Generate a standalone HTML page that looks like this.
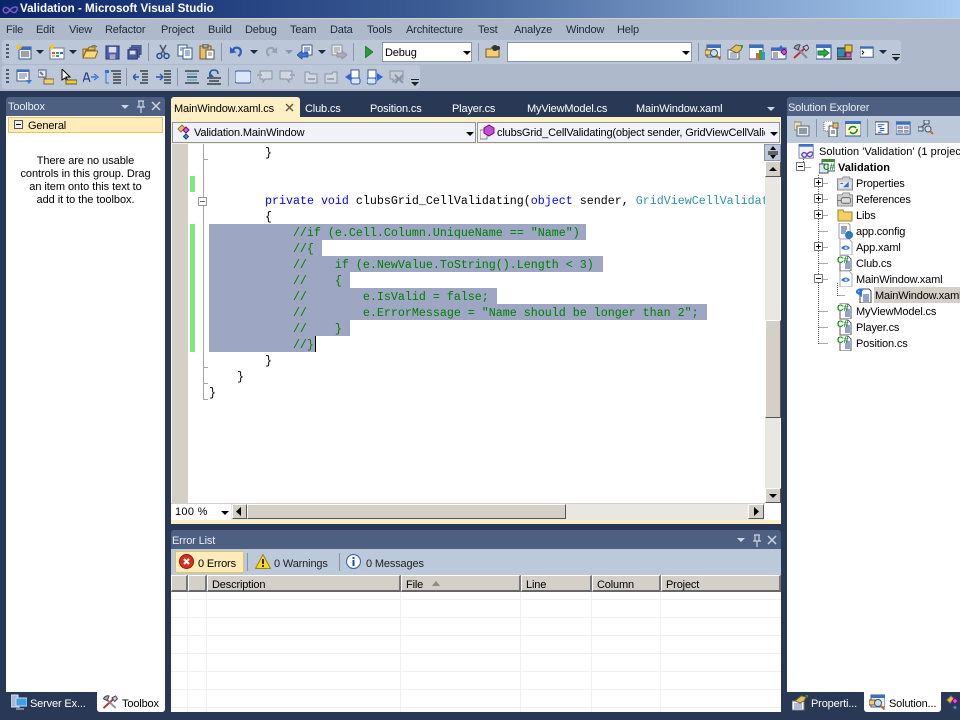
<!DOCTYPE html>
<html><head><meta charset="utf-8"><title>Validation - Microsoft Visual Studio</title>
<style>
*{box-sizing:border-box}
html,body{margin:0;padding:0;width:960px;height:720px;overflow:hidden;background:#293955}
body{position:relative;font:11px/16px "Liberation Sans",sans-serif;letter-spacing:-.15px;color:#000}
.a,.t,svg.i{position:absolute}
.t{white-space:nowrap;margin-top:1px}
.m{color:#1b2a40;top:21px}
.w{color:#fff}
.tab{color:#fff;top:100px}
.h{color:#e8edf5}
.code{position:absolute;left:209px;font:11.67px/16px "Liberation Mono",monospace;letter-spacing:0;white-space:pre;color:#000;width:556px;overflow:hidden;height:16px}
.k{color:#0000ff}.c{color:#008000}.y{color:#2b91af}
.sel{position:absolute;left:209px;background:#9da6c2;height:16px}
.sep{position:absolute;width:1px;background:#8794a9}
.btn{position:absolute;background:#d4d0c8;border:1px solid;border-color:#fff #555 #555 #fff}
.hc{position:absolute;top:575px;height:17px;background:#d4d0c8;border-right:2px solid #777;border-left:1px solid #fff;border-top:1px solid #fff;border-bottom:2px solid #666}
.tri{position:absolute;width:0;height:0;border-left:4px solid transparent;border-right:4px solid transparent;border-top:4px solid #1b2a40}
.rl{position:absolute;left:171px;width:610px;height:1px;background:#f0f0f0}
.vl{position:absolute;top:592px;height:120px;width:1px;background:#f0f0f0}
.grip{position:absolute;width:3px;height:16px;background:repeating-linear-gradient(#4d5a70 0 2px,transparent 2px 4px)}
</style></head><body>
<svg width="0" height="0" style="position:absolute"><defs>
<symbol id="newp" viewBox="0 0 16 16"><rect x="3" y="3" width="12" height="12" fill="#e8f0fa" stroke="#3a5a90"/><rect x="3" y="3" width="12" height="3" fill="#3d6fc0"/><path d="M5 8h8M5 10h8M5 12h8" stroke="#555"/><path d="M1 1l4 4M5 1l-4 4M3 0v6M0 3h6" stroke="#f5c518"/></symbol>
<symbol id="adds" viewBox="0 0 16 16"><rect x="1" y="4" width="14" height="11" fill="#fff" stroke="#6a7a90"/><rect x="3" y="8" width="3" height="2" fill="#e44"/><rect x="7" y="8" width="3" height="2" fill="#3a3"/><rect x="11" y="8" width="3" height="2" fill="#36c"/><rect x="3" y="11" width="3" height="2" fill="#dc3"/><rect x="7" y="11" width="3" height="2" fill="#39c"/><path d="M1 1l4 4M5 1l-4 4M3 0v6M0 3h6" stroke="#f5c518"/></symbol>
<symbol id="open" viewBox="0 0 16 16"><path d="M1 5h5l1-2h6v3H4L1 14z" fill="#e8c060" stroke="#8a6a20"/><path d="M1 14l3-7h12l-3 7z" fill="#f8d880" stroke="#8a6a20"/><path d="M9 3q3-3 6 0" stroke="#666" fill="none"/></symbol>
<symbol id="save" viewBox="0 0 16 16"><rect x="1" y="1" width="14" height="14" fill="#4a5cb0" stroke="#2a3570"/><rect x="4" y="2" width="8" height="6" fill="#dde"/><rect x="5" y="10" width="6" height="5" fill="#aab"/></symbol>
<symbol id="saveall" viewBox="0 0 16 16"><rect x="5" y="0" width="10" height="10" fill="#5a6aa8" stroke="#3a4570"/><rect x="3" y="3" width="10" height="10" fill="#5a6aa8" stroke="#3a4570"/><rect x="1" y="5" width="10" height="10" fill="#4a5ca0" stroke="#2a3570"/><rect x="3" y="6" width="6" height="4" fill="#dde"/></symbol>
<symbol id="cut" viewBox="0 0 16 16"><path d="M5 1l5 9M11 1L6 10" stroke="#556" stroke-width="1.5"/><circle cx="4.5" cy="12" r="2.5" fill="none" stroke="#2a4a9a" stroke-width="1.5"/><circle cx="11.5" cy="12" r="2.5" fill="none" stroke="#2a4a9a" stroke-width="1.5"/></symbol>
<symbol id="copy" viewBox="0 0 16 16"><rect x="1" y="1" width="9" height="11" fill="#fff" stroke="#3a5a90"/><rect x="6" y="4" width="9" height="11" fill="#fff" stroke="#3a5a90"/><path d="M8 7h5M8 9h5M8 11h5M3 4h4M3 6h2" stroke="#3a6ac0"/></symbol>
<symbol id="paste" viewBox="0 0 16 16"><rect x="1" y="2" width="11" height="13" fill="#e8c060" stroke="#7a5a20"/><rect x="4" y="0" width="5" height="4" fill="#aaa" stroke="#555"/><rect x="7" y="6" width="8" height="9" fill="#fff" stroke="#555"/><path d="M9 9h4M9 11h4" stroke="#777"/></symbol>
<symbol id="undo" viewBox="0 0 16 16"><path d="M4 8q1-5 5-4 5 1 3 7l-2 2" fill="none" stroke="#2f5fb5" stroke-width="2.4"/><path d="M1 3l0 7 7-1z" fill="#2f5fb5"/></symbol>
<symbol id="redo" viewBox="0 0 16 16"><path d="M12 8q-1-5-5-4-5 1-3 7l2 2" fill="none" stroke="#98a2ae" stroke-width="2.4"/><path d="M15 3v7l-7-1z" fill="#98a2ae"/></symbol>
<symbol id="nav" viewBox="0 0 16 16"><rect x="5" y="1" width="10" height="10" fill="#fff" stroke="#3a5a90"/><path d="M7 4h6M7 6h6M7 8h4" stroke="#34a"/><path d="M0 11l5-4v2h6v4H5v2z" fill="#3a78d8" stroke="#1a4a90" stroke-width=".7"/></symbol>
<symbol id="navg" viewBox="0 0 16 16"><rect x="1" y="1" width="10" height="10" fill="#e8e8e8" stroke="#8a93a0"/><path d="M3 4h6M3 6h6M3 8h4" stroke="#999"/><path d="M16 11l-5-4v2H6v4h5v2z" fill="#aab" stroke="#889" stroke-width=".7"/></symbol>
<symbol id="find" viewBox="0 0 16 16"><path d="M1 5h5l1-2h7v10H1z" fill="#f0d070" stroke="#7a5a20"/><circle cx="10" cy="4" r="3" fill="#333"/><circle cx="13" cy="4" r="2" fill="#333"/></symbol>
<symbol id="t1" viewBox="0 0 16 16"><rect x="2" y="1" width="14" height="12" fill="#e8f0fa" stroke="#3a5a90"/><rect x="2" y="1" width="14" height="3" fill="#3d6fc0"/><path d="M0 6h6v5H0z" fill="#f0d070" stroke="#7a5a20"/><circle cx="9" cy="9" r="3.5" fill="#cde" stroke="#456"/><path d="M11.5 11.5l4 4" stroke="#b07020" stroke-width="2"/></symbol>
<symbol id="t2" viewBox="0 0 16 16"><rect x="1" y="6" width="11" height="9" fill="#fff" stroke="#5a6a80"/><path d="M3 9h7M3 11h7M3 13h7" stroke="#67a"/><path d="M3 6l6-5 6 1-1 4-4 3z" fill="#e0c060" stroke="#7a6a30"/><path d="M12 1l4 0 0 3z" fill="#2a9a3a"/></symbol>
<symbol id="t3" viewBox="0 0 16 16"><rect x="0" y="1" width="14" height="14" fill="#fff" stroke="#3a5a90"/><rect x="0" y="1" width="14" height="3" fill="#3d6fc0"/><rect x="7" y="9" width="3" height="7" fill="#e55"/><rect x="10" y="6" width="3" height="10" fill="#3a3"/><rect x="13" y="8" width="3" height="8" fill="#39c"/></symbol>
<symbol id="t4" viewBox="0 0 16 16"><rect x="0" y="4" width="15" height="11" fill="#fff" stroke="#3a5a90"/><rect x="0" y="4" width="15" height="3" fill="#3d6fc0"/><path d="M2 9h5M2 11h5M2 13h5" stroke="#557"/><path d="M10 8l3-3 3 3-3 3z" fill="#d060d0" stroke="#808"/><path d="M8 4l2-3 2 3z" fill="#36c"/></symbol>
<symbol id="tools" viewBox="0 0 16 16"><path d="M1 14L12 4" stroke="#c03030" stroke-width="2"/><path d="M14 14L4 4" stroke="#8a8a9a" stroke-width="2"/><path d="M1 4q2-4 6-3L5 6z" fill="#9aa2b0" stroke="#445"/><path d="M10 3l4-2 2 3-3 3z" fill="#ccd" stroke="#445"/></symbol>
<symbol id="t6" viewBox="0 0 16 16"><rect x="0" y="1" width="15" height="14" fill="#fff" stroke="#2a4a9a"/><rect x="0" y="1" width="15" height="3" fill="#3d6fc0"/><path d="M2 7h6V5l5 4-5 4v-2H2z" fill="#2ab02a" stroke="#175"/></symbol>
<symbol id="t7" viewBox="0 0 16 16"><rect x="0" y="4" width="8" height="9" fill="#3a8aa8" stroke="#234"/><rect x="8" y="1" width="7" height="7" fill="#f0c030" stroke="#654"/><rect x="9" y="9" width="5" height="4" fill="#e060c0" stroke="#636"/><path d="M0 15h15" stroke="#555" stroke-width="2"/></symbol>
<symbol id="t8" viewBox="0 0 16 16"><rect x="0" y="2" width="14" height="11" fill="#fff" stroke="#3a5a90"/><rect x="0" y="2" width="14" height="2" fill="#3d6fc0"/><path d="M2 6l2 2-2 2" fill="none" stroke="#000"/></symbol>
<symbol id="b1" viewBox="0 0 16 16"><rect x="1" y="1" width="12" height="11" fill="#fff" stroke="#3a5a90"/><rect x="1" y="1" width="12" height="2" fill="#3d6fc0"/><path d="M3 5h8M3 7h8M3 9h6" stroke="#67a"/><path d="M10 11h6l-3 4z" fill="#3a78d8"/></symbol>
<symbol id="b2" viewBox="0 0 16 16"><rect x="0" y="1" width="8" height="7" fill="#e8f0fa" stroke="#557"/><path d="M2 3l3 3M6 8l5 5" stroke="#777" stroke-width="2"/><rect x="6" y="10" width="10" height="5" fill="#f0d070" stroke="#765"/></symbol>
<symbol id="b3" viewBox="0 0 16 16"><path d="M1 0v11l3-2 2 4 1-1-2-4h4z" fill="#fff" stroke="#000"/><rect x="5" y="11" width="11" height="4" fill="#f0d020" stroke="#654"/></symbol>
<symbol id="b4" viewBox="0 0 16 16"><path d="M0 13l3-9h1l3 9M1.5 10h4" stroke="#23408a" stroke-width="1.2" fill="none"/><path d="M8 8h5M11 5l4 3-4 3" stroke="#3a78d8" stroke-width="1.4" fill="none"/></symbol>
<symbol id="b5" viewBox="0 0 16 16"><path d="M6 2h10M8 5h8M8 8h8M8 11h8M8 14h8" stroke="#000"/><path d="M1 2h3M1 2v12h3" stroke="#2a78d8" fill="none"/><rect x="0" y="1" width="4" height="3" fill="#2a78d8"/></symbol>
<symbol id="b6" viewBox="0 0 16 16"><path d="M7 2h8M9 5h6M9 8h6M9 11h6M7 14h8" stroke="#000"/><path d="M6 8H1M3 5L0 8l3 3" stroke="#2a5aa8" stroke-width="1.4" fill="none"/></symbol>
<symbol id="b7" viewBox="0 0 16 16"><path d="M9 2h7M9 5h7M9 8h7M9 11h7M9 14h7" stroke="#000"/><path d="M1 8h6M5 5l3 3-3 3" stroke="#2a5aa8" stroke-width="1.4" fill="none"/></symbol>
<symbol id="b8" viewBox="0 0 16 16"><path d="M1 2h14M3 5h10M3 8h10M3 11h10M1 14h14" stroke="#000"/><path d="M3 5h10M3 11h10" stroke="#2a9ac8"/></symbol>
<symbol id="b9" viewBox="0 0 16 16"><path d="M1 9h14M3 12h10M1 15h14" stroke="#000"/><path d="M12 5q0-4-4-4T4 5l2 2" fill="none" stroke="#2a5aa8" stroke-width="1.6"/><path d="M3 3v5h5z" fill="#2a5aa8"/></symbol>
<symbol id="bm" viewBox="0 0 16 16"><rect x="0" y="2" width="16" height="12" rx="2" fill="#dbe6f8" stroke="#2f5ab0"/></symbol>
<symbol id="bu" viewBox="0 0 16 16"><path d="M3 2h12v8H8l-2 3V10H3z" fill="#d2d8e2" stroke="#8a94a4"/><path d="M0 6h5" stroke="#a0a8b4" stroke-width="2"/></symbol>
<symbol id="bf" viewBox="0 0 16 16"><path d="M3 3h4l1 2h7v9H3z" fill="#d2d8e2" stroke="#8a94a4"/><path d="M6 10h7" stroke="#a0a8b4" stroke-width="2"/></symbol>
<symbol id="bb" viewBox="0 0 16 16"><rect x="6" y="1" width="8" height="8" fill="#fff" stroke="#3a5a90"/><rect x="6" y="9" width="9" height="6" rx="2" fill="#dbe6f8" stroke="#2f5ab0"/><path d="M0 8l6-4v8z" fill="#2a6ad8"/></symbol>
<symbol id="bc" viewBox="0 0 16 16"><rect x="1" y="1" width="8" height="8" fill="#fff" stroke="#3a5a90"/><rect x="0" y="9" width="9" height="6" rx="2" fill="#dbe6f8" stroke="#2f5ab0"/><path d="M16 8l-6-4v8z" fill="#2a6ad8"/></symbol>
<symbol id="bx" viewBox="0 0 16 16"><path d="M1 2h13v8H7l-3 3V10H1z" fill="#c6ccd6" stroke="#8a94a4"/><path d="M6 6l8 8M14 6l-8 8" stroke="#8a94a4" stroke-width="2"/></symbol>
<symbol id="cs" viewBox="0 0 16 16"><path d="M3 1h8l3 3v12H3z" fill="#fff" stroke="#555a70"/><path d="M8 7h5M8 9h5M8 11h5M8 13h5" stroke="#2a4a90"/><rect x="0" y="1" width="9" height="7" fill="#fff"/><text x="0" y="8" font-size="9" font-weight="bold" letter-spacing="0" fill="#108a10" font-family="Liberation Sans">C#</text></symbol>
<symbol id="xaml" viewBox="0 0 16 16"><path d="M2 0h9l3 3v13H2z" fill="#fff" stroke="#aaa"/><path d="M3 9q5-5 9 0-4 4-9 0z" fill="#2a78d8"/><circle cx="8" cy="9" r="1.5" fill="#bfe0ff"/></symbol>
<symbol id="propf" viewBox="0 0 16 16"><path d="M0 3h5l1-2h7v2h3v12H0z" fill="#cfcfcf" stroke="#888"/><rect x="2" y="6" width="12" height="7" fill="#dfeaf8"/><path d="M12 6v6H6z" fill="#3a6ac0"/><path d="M3 8h3" stroke="#3a6ac0"/></symbol>
<symbol id="reff" viewBox="0 0 16 16"><path d="M0 3h5l1-2h7v2h3v12H0z" fill="#cfcfcf" stroke="#888"/><rect x="4" y="6" width="10" height="6" rx="2" fill="#ddd" stroke="#666"/><path d="M0 9h4" stroke="#666"/></symbol>
<symbol id="folder" viewBox="0 0 16 16"><path d="M1 3h5l1 2h8v9H1z" fill="#f4d060" stroke="#a08030"/></symbol>
<symbol id="cfg" viewBox="0 0 16 16"><path d="M2 0h9l2 2v14H2z" fill="#fff" stroke="#99a"/><path d="M4 4h6M4 6h6M4 8h5M4 10h4" stroke="#2a4a90"/><circle cx="12" cy="12" r="4" fill="#2a78c8"/><path d="M10 11h3v3z" fill="#2a9a3a"/></symbol>
<symbol id="csc" viewBox="0 0 16 16"><path d="M4 2h9l2 2v12H4z" fill="#fff" stroke="#444"/><path d="M7 8h6M7 10h6M7 12h6M7 14h6" stroke="#2a4a90"/><path d="M0 6q2-5 7-3" fill="none" stroke="#2a78d8" stroke-width="2"/><path d="M0 6l6 4V3z" fill="#2a78d8"/></symbol>
<symbol id="sln" viewBox="0 0 18 18"><rect x="0" y="0" width="16" height="16" fill="#eef3fb" stroke="#6a7fa8"/><rect x="0" y="0" width="16" height="3" fill="#3d6fc0"/><path d="M3 12c2-4 5-2 6 0s4 4 6 0-4-4-6 0-4 4-6 0z" fill="none" stroke="#6a4ac0" stroke-width="1.6"/></symbol>
<symbol id="proj" viewBox="0 0 16 16"><rect x="3" y="0" width="13" height="12" fill="#fff" stroke="#456"/><rect x="3" y="0" width="13" height="3" fill="#3d8a3d"/><rect x="0" y="5" width="9" height="9" fill="#e0e8f4" stroke="#456"/><text x="4" y="11" font-size="9" font-weight="bold" letter-spacing="0" fill="#108a10" font-family="Liberation Sans">C#</text></symbol>
<symbol id="se1" viewBox="0 0 16 16"><path d="M0 1h7v8H0z" fill="#f0e0a0" stroke="#887"/><rect x="3" y="5" width="12" height="10" fill="#e8eef6" stroke="#667"/><path d="M5 8h8M5 10h8M5 12h8" stroke="#345"/></symbol>
<symbol id="se2" viewBox="0 0 16 16"><rect x="1" y="0" width="9" height="10" fill="#fff" stroke="#667" stroke-dasharray="1 1"/><path d="M6 5h5l3 3v8H6z" fill="#fff" stroke="#445"/><path d="M8 10h4M8 12h4" stroke="#2a4a90"/><rect x="10" y="2" width="5" height="5" fill="#e8c060" stroke="#765"/></symbol>
<symbol id="se3" viewBox="0 0 16 16"><rect x="0" y="0" width="16" height="15" fill="#fff7d0" stroke="#2a5a9a"/><rect x="0" y="0" width="16" height="3" fill="#3d6fc0"/><path d="M4 9a4 4 0 0 1 7-2M12 8a4 4 0 0 1-7 3" fill="none" stroke="#1a8a1a" stroke-width="1.6"/></symbol>
<symbol id="se4" viewBox="0 0 16 16"><rect x="0" y="1" width="14" height="13" fill="#fff" stroke="#334"/><path d="M3 4h7M3 6h4M5 8h5M5 10h5M3 12h4" stroke="#1a5ad8"/></symbol>
<symbol id="se5" viewBox="0 0 16 16"><rect x="0" y="1" width="15" height="13" fill="#e8eef6" stroke="#2a5a9a"/><rect x="0" y="1" width="15" height="3" fill="#3d6fc0"/><path d="M2 6h5v2H2zM9 6h4v2H9zM2 10h5v2H2zM9 10h4v2H9z" fill="#aab" stroke="#667" stroke-width=".5"/></symbol>
<symbol id="se6" viewBox="0 0 16 16"><rect x="6" y="0" width="5" height="4" fill="#cde" stroke="#456"/><rect x="0" y="7" width="5" height="4" fill="#cde" stroke="#456"/><path d="M8 4L3 7" stroke="#456"/><circle cx="10" cy="9" r="3" fill="#cde" stroke="#456"/><path d="M12 11l3 3" stroke="#c07020" stroke-width="2"/></symbol>
<symbol id="srv" viewBox="0 0 16 16"><rect x="0" y="1" width="7" height="12" fill="#a8b8d0" stroke="#dde"/><rect x="5" y="4" width="11" height="8" fill="#3aa0e8" stroke="#cde"/><path d="M8 12v2M5 15h8" stroke="#cde"/></symbol>
<symbol id="prp" viewBox="0 0 16 16"><rect x="0" y="6" width="12" height="9" fill="#fff" stroke="#778"/><path d="M2 9h8M2 11h8M2 13h8" stroke="#67a"/><path d="M3 6l6-5 5 1-2 4-4 2z" fill="#e0c060" stroke="#7a6a30"/><path d="M13 0l3 0 0 3z" fill="#2a9a3a"/></symbol>
</defs></svg>

<!-- title bar -->
<div class="a" style="left:0;top:0;width:960px;height:18px;background:linear-gradient(90deg,#0a246a 0,#3b5c94 45%,#7b9cc8 75%,#a6caf0 100%)"></div>
<div class="a" style="left:0;top:18px;width:960px;height:1px;background:#d4d0c8"></div>
<svg class="i" style="left:2px;top:6px" width="16" height="8" viewBox="0 0 16 8"><path d="M1 4c1.5-4 4-3 7 0s5 4 7 0-4-4-7 0-5.500 4-7 0z" fill="none" stroke="#7a5ac8" stroke-width="1.500"/></svg>
<div class="t" style="left:20px;top:1px;margin-top:0;color:#fff;font-weight:bold;font-size:11.6px;letter-spacing:0">Validation - Microsoft Visual Studio</div>

<!-- menu -->
<div class="a" style="left:0;top:19px;width:960px;height:72px;background:#aeb9cb"></div>
<span class="t m" style="left:6px">File</span><span class="t m" style="left:36px">Edit</span><span class="t m" style="left:69px">View</span><span class="t m" style="left:105px">Refactor</span><span class="t m" style="left:161px">Project</span><span class="t m" style="left:208px">Build</span><span class="t m" style="left:245px">Debug</span><span class="t m" style="left:290px">Team</span><span class="t m" style="left:330px">Data</span><span class="t m" style="left:367px">Tools</span><span class="t m" style="left:406px">Architecture</span><span class="t m" style="left:478px">Test</span><span class="t m" style="left:514px">Analyze</span><span class="t m" style="left:566px">Window</span><span class="t m" style="left:617px">Help</span>

<!-- toolbar 1 -->
<div class="a" style="left:2px;top:40px;width:899px;height:24px;background:#bcc7d8;border-radius:3px"></div>
<div class="grip" style="left:6px;top:44px"></div>
<svg class="i" style="left:16px;top:44px" width="16" height="16"><use href="#newp"/></svg><div class="tri" style="left:36px;top:50px"></div>
<svg class="i" style="left:49px;top:44px" width="16" height="16"><use href="#adds"/></svg><div class="tri" style="left:69px;top:50px"></div>
<svg class="i" style="left:82px;top:44px" width="16" height="16"><use href="#open"/></svg>
<svg class="i" style="left:105px;top:45px" width="15" height="15"><use href="#save"/></svg>
<svg class="i" style="left:127px;top:45px" width="15" height="15"><use href="#saveall"/></svg>
<div class="sep" style="left:148px;top:43px;height:18px"></div>
<svg class="i" style="left:155px;top:44px" width="16" height="16"><use href="#cut"/></svg>
<svg class="i" style="left:177px;top:44px" width="16" height="16"><use href="#copy"/></svg>
<svg class="i" style="left:199px;top:44px" width="16" height="16"><use href="#paste"/></svg>
<div class="sep" style="left:221px;top:43px;height:18px"></div>
<svg class="i" style="left:229px;top:44px" width="15" height="15"><use href="#undo"/></svg><div class="tri" style="left:250px;top:50px"></div>
<svg class="i" style="left:264px;top:44px" width="14" height="15"><use href="#redo"/></svg><div class="tri" style="left:285px;top:50px;border-top-color:#8a94a4"></div>
<svg class="i" style="left:297px;top:44px" width="16" height="16"><use href="#nav"/></svg><div class="tri" style="left:318px;top:50px"></div>
<svg class="i" style="left:331px;top:44px" width="16" height="16"><use href="#navg"/></svg>
<div class="sep" style="left:353px;top:43px;height:18px"></div>
<svg class="i" style="left:365px;top:46px" width="8" height="12"><path d="M0 0l8 6-8 6z" fill="#2a9a3a" stroke="#165a20" stroke-width=".6"/></svg>
<div class="a" style="left:382px;top:42px;width:90px;height:20px;background:#fff;border:1px solid #8a94a8"></div>
<span class="t" style="left:385px;top:44px">Debug</span><div class="tri" style="left:463px;top:51px;border-top-color:#000"></div>
<div class="sep" style="left:478px;top:43px;height:18px"></div>
<svg class="i" style="left:485px;top:44px" width="16" height="16"><use href="#find"/></svg>
<div class="a" style="left:507px;top:42px;width:185px;height:20px;background:#fff;border:1px solid #8a94a8"></div>
<div class="tri" style="left:682px;top:51px;border-top-color:#000"></div>
<div class="sep" style="left:698px;top:43px;height:18px"></div>
<svg class="i" style="left:705px;top:44px" width="16" height="16"><use href="#t1"/></svg>
<svg class="i" style="left:727px;top:44px" width="16" height="16"><use href="#t2"/></svg>
<svg class="i" style="left:749px;top:44px" width="16" height="16"><use href="#t3"/></svg>
<svg class="i" style="left:771px;top:44px" width="16" height="16"><use href="#t4"/></svg>
<svg class="i" style="left:793px;top:44px" width="16" height="16"><use href="#tools"/></svg>
<svg class="i" style="left:816px;top:44px" width="16" height="16"><use href="#t6"/></svg>
<svg class="i" style="left:837px;top:44px" width="16" height="16"><use href="#t7"/></svg>
<svg class="i" style="left:860px;top:45px" width="15" height="15"><use href="#t8"/></svg><div class="tri" style="left:879px;top:50px"></div>
<div class="a" style="left:892px;top:54px;width:8px;height:1px;background:#222"></div><div class="tri" style="left:892px;top:57px;border-top-color:#222"></div>

<!-- toolbar 2 -->
<div class="a" style="left:2px;top:65px;width:418px;height:24px;background:#bcc7d8;border-radius:3px"></div>
<div class="grip" style="left:6px;top:69px"></div>
<svg class="i" style="left:16px;top:69px" width="16" height="16"><use href="#b1"/></svg>
<svg class="i" style="left:38px;top:69px" width="16" height="16"><use href="#b2"/></svg>
<svg class="i" style="left:61px;top:69px" width="16" height="16"><use href="#b3"/></svg>
<svg class="i" style="left:83px;top:69px" width="16" height="16"><use href="#b4"/></svg>
<svg class="i" style="left:105px;top:69px" width="16" height="16"><use href="#b5"/></svg>
<div class="sep" style="left:126px;top:68px;height:18px"></div>
<svg class="i" style="left:133px;top:69px" width="16" height="16"><use href="#b6"/></svg>
<svg class="i" style="left:155px;top:69px" width="16" height="16"><use href="#b7"/></svg>
<div class="sep" style="left:177px;top:68px;height:18px"></div>
<svg class="i" style="left:184px;top:69px" width="16" height="16"><use href="#b8"/></svg>
<svg class="i" style="left:206px;top:69px" width="16" height="16"><use href="#b9"/></svg>
<div class="sep" style="left:228px;top:68px;height:18px"></div>
<svg class="i" style="left:235px;top:69px" width="16" height="16"><use href="#bm"/></svg>
<svg class="i" style="left:257px;top:69px" width="16" height="16"><use href="#bu"/></svg>
<svg class="i" style="left:279px;top:69px;transform:scaleX(-1)" width="16" height="16"><use href="#bu"/></svg>
<svg class="i" style="left:302px;top:69px" width="16" height="16"><use href="#bf"/></svg>
<svg class="i" style="left:324px;top:69px;transform:scaleX(-1)" width="16" height="16"><use href="#bf"/></svg>
<svg class="i" style="left:345px;top:69px" width="16" height="16"><use href="#bb"/></svg>
<svg class="i" style="left:367px;top:69px" width="16" height="16"><use href="#bc"/></svg>
<svg class="i" style="left:389px;top:69px" width="16" height="16"><use href="#bx"/></svg>
<div class="a" style="left:411px;top:79px;width:8px;height:1px;background:#222"></div><div class="tri" style="left:411px;top:82px;border-top-color:#222"></div>

<!-- main dark -->
<div class="a" style="left:0;top:91px;width:960px;height:629px;background:#293955"></div>

<!-- Toolbox -->
<div class="a" style="left:6px;top:97px;width:159px;height:19px;background:#4d6082;border-radius:3px 3px 0 0"></div>
<span class="t h" style="left:8px;top:98px">Toolbox</span>
<div class="tri" style="left:121px;top:105px;border-top-color:#ced4df"></div>
<svg class="i" style="left:136px;top:100px" width="10" height="13"><path d="M2 1h6M3 1v6h4V1M1 7h8M5 7v6" fill="none" stroke="#ced4df" stroke-width="1.200"/></svg>
<svg class="i" style="left:151px;top:101px" width="10" height="10"><path d="M1 1l8 8M9 1L1 9" stroke="#ced4df" stroke-width="1.500"/></svg>
<div class="a" style="left:6px;top:116px;width:159px;height:576px;background:#fff"></div>
<div class="a" style="left:8px;top:117px;width:155px;height:16px;background:#ffecb8;border:1px solid #e5c365"></div>
<div class="a" style="left:14px;top:120px;width:9px;height:9px;background:#eee;border:1px solid #555"></div><div class="a" style="left:16px;top:124px;width:5px;height:1px;background:#000"></div>
<span class="t" style="left:28px;top:117px">General</span>
<div class="a" style="left:6px;top:155px;width:159px;text-align:center;line-height:13px;letter-spacing:-.05px">There are no usable<br>controls in this group. Drag<br>an item onto this text to<br>add it to the toolbox.</div>
<svg class="i" style="left:11px;top:694px" width="16" height="16"><use href="#srv"/></svg>
<span class="t w" style="left:30px;top:695px">Server Ex...</span>
<div class="a" style="left:97px;top:692px;width:68px;height:20px;background:#fff;border-radius:0 0 3px 3px"></div>
<svg class="i" style="left:102px;top:695px" width="16" height="15"><use href="#tools"/></svg>
<span class="t" style="left:122px;top:695px">Toolbox</span>

<!-- Editor tabs -->
<div class="a" style="left:171px;top:97px;width:129px;height:21px;background:#ffefc4;border-radius:3px 3px 0 0"></div>
<span class="t" style="left:174px;top:100px">MainWindow.xaml.cs</span>
<svg class="i" style="left:285px;top:103px" width="9" height="9"><path d="M1 1l7 7M8 1L1 8" stroke="#6a5a3a" stroke-width="1.500"/></svg>
<span class="t tab" style="left:305px">Club.cs</span><span class="t tab" style="left:370px">Position.cs</span><span class="t tab" style="left:452px">Player.cs</span><span class="t tab" style="left:527px">MyViewModel.cs</span><span class="t tab" style="left:636px">MainWindow.xaml</span>
<div class="tri" style="left:767px;top:107px;border-top-color:#ced4df"></div>
<div class="a" style="left:171px;top:117px;width:610px;height:5px;background:#ffefc4"></div>
<!-- nav bars -->
<div class="a" style="left:171px;top:122px;width:610px;height:22px;background:#ffefc4"></div>
<div class="a" style="left:172px;top:122px;width:304px;height:21px;background:#f0f2f8;border:1px solid #8a94a8"></div>
<div class="a" style="left:477px;top:122px;width:303px;height:21px;background:#f0f2f8;border:1px solid #8a94a8"></div>
<svg class="i" style="left:177px;top:124px" width="16" height="16"><path d="M1 5l4-4 3 3-4 4z" fill="#f0c030" stroke="#876"/><path d="M9 3l3 3-3 3-3-3z" fill="#d060d0" stroke="#808"/><path d="M9 10l2.500 2.500L9 15l-2.500-2.500z" fill="#4a8ad8" stroke="#246"/></svg>
<span class="t" style="left:194px;top:124px">Validation.MainWindow</span>
<div class="tri" style="left:466px;top:132px;border-top-color:#000"></div>
<svg class="i" style="left:480px;top:124px" width="16" height="16"><rect x="0" y="6" width="7" height="9" fill="#eee" stroke="#888"/><path d="M9 1l5 3v5l-5 3-5-3V4z" fill="#c050d0" stroke="#808"/></svg>
<div class="t" style="left:497px;top:124px;width:268px;overflow:hidden">clubsGrid_CellValidating(object sender, GridViewCellValidatingEventArgs e)</div>
<div class="tri" style="left:770px;top:132px;border-top-color:#000"></div>

<!-- editor -->
<div class="a" style="left:171px;top:144px;width:610px;height:376px;background:#fff"></div>
<div class="a" style="left:172px;top:144px;width:16px;height:376px;background:#d4d0c8"></div>
<div class="a" style="left:190px;top:176px;width:5px;height:16px;background:#7fe87f"></div>
<div class="a" style="left:190px;top:224px;width:5px;height:128px;background:#7fe87f"></div>
<div class="a" style="left:203px;top:144px;width:1px;height:16px;background:#a8a8a8"></div>
<div class="a" style="left:203px;top:159px;width:5px;height:1px;background:#a8a8a8"></div>
<div class="a" style="left:198px;top:197px;width:9px;height:9px;background:#fff;border:1px solid #999"></div><div class="a" style="left:200px;top:201px;width:5px;height:1px;background:#666"></div>
<div class="a" style="left:203px;top:160px;width:1px;height:37px;background:#a8a8a8"></div>
<div class="a" style="left:203px;top:206px;width:1px;height:194px;background:#a8a8a8"></div>
<div class="a" style="left:203px;top:367px;width:5px;height:1px;background:#a8a8a8"></div>
<div class="a" style="left:203px;top:383px;width:5px;height:1px;background:#a8a8a8"></div>
<div class="a" style="left:203px;top:399px;width:5px;height:1px;background:#a8a8a8"></div>

<div class="sel" style="top:224px;width:377px"></div>
<div class="sel" style="top:240px;width:113px"></div>
<div class="sel" style="top:256px;width:394px"></div>
<div class="sel" style="top:272px;width:141px"></div>
<div class="sel" style="top:288px;width:288px"></div>
<div class="sel" style="top:304px;width:498px"></div>
<div class="sel" style="top:320px;width:141px"></div>
<div class="sel" style="top:336px;width:106px"></div>
<div class="a" style="left:315px;top:336px;width:1px;height:16px;background:#000"></div>

<div class="code" style="top:145px">        }</div>
<div class="code" style="top:193px">        <span class="k">private</span> <span class="k">void</span> clubsGrid_CellValidating(<span class="k">object</span> sender, <span class="y">GridViewCellValidatingEventArgs</span> e)</div>
<div class="code" style="top:209px">        {</div>
<div class="code c" style="top:225px">            //if (e.Cell.Column.UniqueName == "Name")</div>
<div class="code c" style="top:241px">            //{</div>
<div class="code c" style="top:257px">            //    if (e.NewValue.ToString().Length &lt; 3)</div>
<div class="code c" style="top:273px">            //    {</div>
<div class="code c" style="top:289px">            //        e.IsValid = false;</div>
<div class="code c" style="top:305px">            //        e.ErrorMessage = "Name should be longer than 2";</div>
<div class="code c" style="top:321px">            //    }</div>
<div class="code c" style="top:337px">            //}</div>
<div class="code" style="top:353px">        }</div>
<div class="code" style="top:369px">    }</div>
<div class="code" style="top:385px">}</div>

<!-- vertical scrollbar -->
<div class="a" style="left:765px;top:144px;width:15px;height:359px;background:#e9e7e2"></div>
<div class="a" style="left:764px;top:144px;width:17px;height:17px;background:#bcc7d8;border:1px solid #8a94a8"></div>
<svg class="i" style="left:767px;top:146px" width="12" height="13"><path d="M1 6h10M1 8h10" stroke="#000"/><path d="M6 0l3 4H3zM6 13l3-4H3z" fill="#000"/></svg>
<div class="btn" style="left:765px;top:161px;width:16px;height:16px"></div><div class="tri" style="left:769px;top:167px;border-top:0;border-bottom:4px solid #000"></div>
<div class="btn" style="left:765px;top:320px;width:16px;height:98px"></div>
<div class="btn" style="left:765px;top:488px;width:16px;height:15px"></div><div class="tri" style="left:769px;top:494px;border-top-color:#000"></div>
<!-- h scrollbar -->
<div class="a" style="left:172px;top:504px;width:59px;height:16px;background:#fff"></div>
<span class="t" style="left:175px;top:503px;letter-spacing:.3px">100 %</span>
<div class="tri" style="left:221px;top:511px;border-top-color:#000"></div>
<div class="a" style="left:231px;top:504px;width:533px;height:16px;background:#e9e7e2"></div>
<div class="btn" style="left:232px;top:504px;width:15px;height:15px"></div><svg class="i" style="left:236px;top:507px" width="5" height="9"><path d="M5 0v9L0 4.500z" fill="#000"/></svg>
<div class="btn" style="left:247px;top:504px;width:319px;height:15px"></div>
<div class="btn" style="left:748px;top:504px;width:16px;height:15px"></div><svg class="i" style="left:754px;top:507px" width="5" height="9"><path d="M0 0v9l5-4.500z" fill="#000"/></svg>
<div class="a" style="left:171px;top:503px;width:594px;height:1px;background:#d4d0c8"></div>
<div class="a" style="left:171px;top:520px;width:610px;height:4px;background:#ffefc4"></div>

<!-- Error list -->
<div class="a" style="left:171px;top:530px;width:610px;height:19px;background:#4d6082;border-radius:3px 3px 0 0"></div>
<span class="t h" style="left:172px;top:532px">Error List</span>
<div class="tri" style="left:737px;top:538px;border-top-color:#ced4df"></div>
<svg class="i" style="left:752px;top:534px" width="10" height="13"><path d="M2 1h6M3 1v6h4V1M1 7h8M5 7v6" fill="none" stroke="#ced4df" stroke-width="1.200"/></svg>
<svg class="i" style="left:767px;top:535px" width="10" height="10"><path d="M1 1l8 8M9 1L1 9" stroke="#ced4df" stroke-width="1.500"/></svg>
<div class="a" style="left:171px;top:549px;width:610px;height:26px;background:#bcc9db"></div>
<div class="a" style="left:175px;top:551px;width:69px;height:22px;background:#ffecb8;border:1px solid #e5c365"></div>
<svg class="i" style="left:179px;top:554px" width="15" height="15"><circle cx="7.500" cy="7.500" r="7" fill="#d83020" stroke="#8a1a10"/><path d="M5 5l5 5M10 5l-5 5" stroke="#fff" stroke-width="2"/></svg>
<span class="t" style="left:198px;top:555px">0 Errors</span>
<div class="sep" style="left:247px;top:553px;height:18px"></div>
<svg class="i" style="left:255px;top:554px" width="16" height="15"><path d="M8 0.500l7.500 14H0.500z" fill="#f8d820" stroke="#a08010"/><path d="M8 5v5M8 11v2" stroke="#000" stroke-width="1.600"/></svg>
<span class="t" style="left:274px;top:555px;color:#222">0 Warnings</span>
<div class="sep" style="left:339px;top:553px;height:18px"></div>
<svg class="i" style="left:346px;top:554px" width="15" height="15"><circle cx="7.500" cy="7.500" r="7" fill="#fff" stroke="#3a6ab0" stroke-width="1.200"/><path d="M7.500 6v6M7.500 3v2" stroke="#1a4aa0" stroke-width="2"/></svg>
<span class="t" style="left:366px;top:555px;color:#222">0 Messages</span>

<div class="a" style="left:171px;top:592px;width:610px;height:120px;background:#fff"></div>
<div class="hc" style="left:171px;width:17px"></div><div class="hc" style="left:188px;width:19px"></div><div class="hc" style="left:207px;width:194px"></div><div class="hc" style="left:401px;width:120px"></div><div class="hc" style="left:521px;width:71px"></div><div class="hc" style="left:592px;width:69px"></div><div class="hc" style="left:661px;width:120px"></div>
<span class="t" style="left:212px;top:576px">Description</span>
<span class="t" style="left:406px;top:576px">File</span>
<div class="tri" style="left:432px;top:581px;border-top:0;border-bottom:5px solid #8a8a84"></div>
<span class="t" style="left:526px;top:576px">Line</span>
<span class="t" style="left:597px;top:576px">Column</span>
<span class="t" style="left:666px;top:576px">Project</span>
<div class="rl" style="top:599px"></div><div class="rl" style="top:617px"></div><div class="rl" style="top:635px"></div><div class="rl" style="top:653px"></div><div class="rl" style="top:671px"></div><div class="rl" style="top:689px"></div><div class="rl" style="top:707px"></div>
<div class="vl" style="left:187px"></div><div class="vl" style="left:206px"></div><div class="vl" style="left:400px"></div><div class="vl" style="left:520px"></div><div class="vl" style="left:591px"></div><div class="vl" style="left:660px"></div>

<!-- Solution Explorer -->
<div class="a" style="left:787px;top:97px;width:173px;height:19px;background:#4d6082;border-radius:3px 0 0 0"></div>
<span class="t h" style="left:788px;top:99px">Solution Explorer</span>
<div class="a" style="left:787px;top:116px;width:173px;height:27px;background:#bcc9db"></div>
<svg class="i" style="left:794px;top:121px" width="16" height="16"><use href="#se1"/></svg>
<div class="sep" style="left:816px;top:119px;height:18px"></div>
<svg class="i" style="left:823px;top:121px" width="16" height="16"><use href="#se2"/></svg>
<svg class="i" style="left:845px;top:121px" width="16" height="16"><use href="#se3"/></svg>
<div class="sep" style="left:867px;top:119px;height:18px"></div>
<svg class="i" style="left:875px;top:121px" width="15" height="15"><use href="#se4"/></svg>
<svg class="i" style="left:896px;top:121px" width="15" height="15"><use href="#se5"/></svg>
<svg class="i" style="left:918px;top:120px" width="16" height="16"><use href="#se6"/></svg>
<div class="a" style="left:787px;top:143px;width:173px;height:549px;background:#fff"></div>
<div class="a" style="left:874px;top:287px;width:86px;height:16px;background:#d4d0c8"></div>
<svg class="i" style="left:787px;top:143px" width="173" height="220"><g fill="none" stroke="#555" stroke-dasharray="1 1"><path d="M16.500 16V20M16.500 24.500h8M31.500 32V201M35.500 40.500h5M35.500 56.500h5M35.500 72.500h5M31.500 88.500h9M35.500 104.500h5M31.500 120.500h9M35.500 136.500h5M50.500 140V153M50.500 152.500h7M31.500 168.500h9M31.500 184.500h9M31.500 200.500h9"/></g></svg>
<svg class="i" style="left:798px;top:144px" width="18" height="16"><use href="#sln"/></svg>
<span class="t" style="left:819px;top:143px;width:141px;overflow:hidden;letter-spacing:.05px">Solution 'Validation' (1 project)</span>
<div class="a" style="left:796px;top:162px;width:9px;height:9px;background:#fff;border:1px solid #777"></div><div class="a" style="left:798px;top:166px;width:5px;height:1px;background:#000"></div>
<svg class="i" style="left:819px;top:159px" width="16" height="16"><use href="#proj"/></svg>
<span class="t" style="left:838px;top:159px;font-weight:bold;letter-spacing:0">Validation</span>
<span class="a" style="left:814px;top:178px;width:9px;height:9px;background:#fff;border:1px solid #777"></span><span class="a" style="left:816px;top:182px;width:5px;height:1px;background:#000"></span><span class="a" style="left:818px;top:180px;width:1px;height:5px;background:#000"></span>
<svg class="i" style="left:837px;top:176px" width="16" height="15"><use href="#propf"/></svg><span class="t" style="left:856px;top:175px">Properties</span>
<span class="a" style="left:814px;top:194px;width:9px;height:9px;background:#fff;border:1px solid #777"></span><span class="a" style="left:816px;top:198px;width:5px;height:1px;background:#000"></span><span class="a" style="left:818px;top:196px;width:1px;height:5px;background:#000"></span>
<svg class="i" style="left:837px;top:192px" width="16" height="15"><use href="#reff"/></svg><span class="t" style="left:856px;top:191px">References</span>
<span class="a" style="left:814px;top:210px;width:9px;height:9px;background:#fff;border:1px solid #777"></span><span class="a" style="left:816px;top:214px;width:5px;height:1px;background:#000"></span><span class="a" style="left:818px;top:212px;width:1px;height:5px;background:#000"></span>
<svg class="i" style="left:837px;top:207px" width="16" height="16"><use href="#folder"/></svg><span class="t" style="left:856px;top:207px">Libs</span>
<svg class="i" style="left:837px;top:223px" width="16" height="16"><use href="#cfg"/></svg><span class="t" style="left:856px;top:223px">app.config</span>
<span class="a" style="left:814px;top:242px;width:9px;height:9px;background:#fff;border:1px solid #777"></span><span class="a" style="left:816px;top:246px;width:5px;height:1px;background:#000"></span><span class="a" style="left:818px;top:244px;width:1px;height:5px;background:#000"></span>
<svg class="i" style="left:838px;top:239px" width="16" height="16"><use href="#xaml"/></svg><span class="t" style="left:856px;top:239px">App.xaml</span>
<svg class="i" style="left:837px;top:255px" width="16" height="16"><use href="#cs"/></svg><span class="t" style="left:856px;top:255px">Club.cs</span>
<span class="a" style="left:814px;top:274px;width:9px;height:9px;background:#fff;border:1px solid #777"></span><span class="a" style="left:816px;top:278px;width:5px;height:1px;background:#000"></span>
<svg class="i" style="left:838px;top:271px" width="16" height="16"><use href="#xaml"/></svg><span class="t" style="left:856px;top:271px">MainWindow.xaml</span>
<svg class="i" style="left:856px;top:287px" width="16" height="16"><use href="#csc"/></svg><span class="t" style="left:875px;top:287px;width:85px;overflow:hidden">MainWindow.xaml.cs</span>
<svg class="i" style="left:837px;top:303px" width="16" height="16"><use href="#cs"/></svg><span class="t" style="left:856px;top:303px">MyViewModel.cs</span>
<svg class="i" style="left:837px;top:319px" width="16" height="16"><use href="#cs"/></svg><span class="t" style="left:856px;top:319px">Player.cs</span>
<svg class="i" style="left:837px;top:335px" width="16" height="16"><use href="#cs"/></svg><span class="t" style="left:856px;top:335px">Position.cs</span>

<svg class="i" style="left:792px;top:695px" width="16" height="16"><use href="#prp"/></svg>
<span class="t w" style="left:811px;top:695px">Properti...</span>
<div class="a" style="left:864px;top:692px;width:77px;height:20px;background:#fff;border-radius:0 0 3px 3px"></div>
<svg class="i" style="left:869px;top:694px" width="16" height="16"><use href="#t1"/></svg>
<span class="t" style="left:889px;top:695px">Solution...</span>
<svg class="i" style="left:946px;top:695px" width="16" height="16"><path d="M1 5l4-4 3 3-4 4z" fill="#f0c030" stroke="#876"/><path d="M9 3l3 3-3 3-3-3z" fill="#d060d0" stroke="#808"/><path d="M9 10l2.500 2.500L9 15l-2.500-2.500z" fill="#4a8ad8" stroke="#246"/></svg>
</body></html>
